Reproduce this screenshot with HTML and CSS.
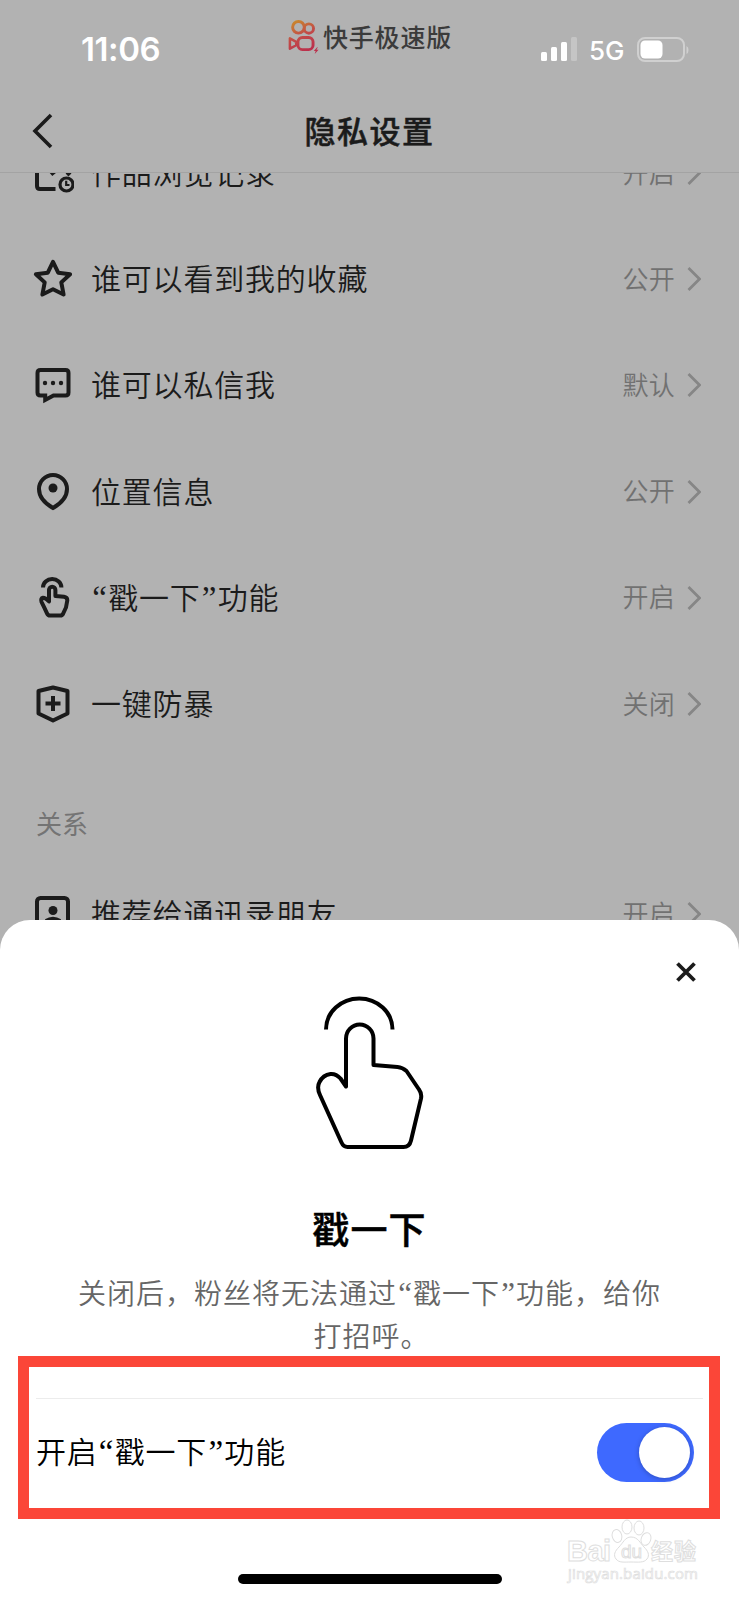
FILE: index.html
```html
<!DOCTYPE html>
<html lang="zh-CN">
<head>
<meta charset="utf-8">
<title>隐私设置</title>
<link rel="stylesheet" href="styles.css">
</head>
<body>
<div class="screen">
  <header class="top">
    <div class="status">
      <div class="time">11:06</div>
      <div class="brand">
        <svg class="brand-logo" width="32" height="36" viewBox="0 0 32 36" fill="none" stroke-width="3">
          <defs>
            <linearGradient id="warm" gradientUnits="userSpaceOnUse" x1="5" y1="2" x2="20" y2="32">
              <stop offset="0" stop-color="#c98a2c"/><stop offset=".5" stop-color="#c24c48"/><stop offset="1" stop-color="#bb304c"/>
            </linearGradient>
          </defs>
          <g stroke="url(#warm)">
            <circle cx="10.300" cy="8.500" r="6"/>
            <circle cx="21" cy="9.800" r="4.800"/>
            <rect x="9.800" y="19" width="15.500" height="12.500" rx="4.500"/>
            <path d="M1.500 20v10.500l6.500-3.500v-3.500z" stroke-linejoin="round" stroke-width="2.600"/>
          </g>
          <path d="M29.500 29l-3.500 4h2l-1 3 4-4.500h-2.200l1.400-2.500z" fill="#bb304c"/>
        </svg>
        <span>快手极速版</span>
      </div>
      <div class="signals">
        <svg width="38" height="26" viewBox="0 0 38 26" fill="#fff">
          <rect x="1" y="15" width="6" height="9" rx="1.500"/>
          <rect x="11" y="10" width="6" height="14" rx="1.500"/>
          <rect x="21" y="5" width="6" height="19" rx="1.500"/>
          <rect x="31" y="0" width="6" height="24" rx="1.500" opacity=".25"/>
        </svg>
        <span class="network">5G</span>
        <svg class="battery" width="52" height="26" viewBox="0 0 52 26">
          <rect x="1" y="1" width="46" height="23" rx="7" fill="none" stroke="#d0d0d0" stroke-width="2"/>
          <rect x="3.500" y="3.500" width="22" height="18" rx="4.500" fill="#fff"/>
          <path d="M49.500 9v8q2-1 2-4t-2-4z" fill="#d0d0d0"/>
        </svg>
      </div>
    </div>
    <div class="nav">
      <svg class="back" width="22" height="36" viewBox="0 0 22 36"><path d="M20 2L4 18l16 16" fill="none" stroke="#1b1b1b" stroke-width="3.600"/></svg>
      <h1>隐私设置</h1>
    </div>
  </header>

  <main class="list">
    <div class="row">
      <svg class="icon" viewBox="0 0 42 42"><path d="M15 8H5v26q0 3 3 3h15.500" stroke-linejoin="round"/><path d="M19 22.500l6-5M35 23l3-3"/><circle cx="34.500" cy="32.500" r="6.500" stroke-width="3.200"/><path d="M34.200 28.800v4.200h3.300" stroke-width="2.200"/></svg>
      <span class="label">作品浏览记录</span><span class="value">开启</span>
      <svg class="arrow" viewBox="0 0 14 26"><path d="M1.500 2l11 11-11 11"/></svg>
    </div>
    <div class="row">
      <svg class="icon" viewBox="0 0 42 42"><path d="M21 3.800l5.200 10.900 11.900 1.500-8.800 8.200 2.300 12.100L21 31.300 10.400 36.500l2.300-12.100-8.800-8.200 11.900-1.500z" stroke-linejoin="round"/></svg>
      <span class="label">谁可以看到我的收藏</span><span class="value">公开</span>
      <svg class="arrow" viewBox="0 0 14 26"><path d="M1.500 2l11 11-11 11"/></svg>
    </div>
    <div class="row">
      <svg class="icon" viewBox="0 0 42 42"><path d="M8.500 6h25q3 0 3 3v19.500q0 3-3 3H21.500l-8.300 4.500v-4.500H8.500q-3 0-3-3V9q0-3 3-3z"/><g fill="#1b1b1b" stroke="none"><circle cx="13" cy="19" r="2.200"/><circle cx="21" cy="19" r="2.200"/><circle cx="29" cy="19" r="2.200"/></g></svg>
      <span class="label">谁可以私信我</span><span class="value">默认</span>
      <svg class="arrow" viewBox="0 0 14 26"><path d="M1.500 2l11 11-11 11"/></svg>
    </div>
    <div class="row">
      <svg class="icon" viewBox="0 0 42 42"><path d="M21 37C14 33 7 26.500 7 18a14 14 0 0 1 28 0c0 8.500-7 15-14 19z"/><circle cx="21" cy="17" r="4.500" fill="#1b1b1b" stroke="none"/></svg>
      <span class="label">位置信息</span><span class="value">公开</span>
      <svg class="arrow" viewBox="0 0 14 26"><path d="M1.500 2l11 11-11 11"/></svg>
    </div>
    <div class="row">
      <svg class="icon" viewBox="0 0 42 42"><path d="M11 10.500a9.200 8.500 0 0 1 18.400 0" /><path d="M17 24.500V13a3.200 3.200 0 0 1 6.400 0V19l8.600.8q3.300.5 3.300 3.500-.5 7-4 13-1 2.200-3 2.200H18q-2 0-3-2.200-2.500-5.500-5.500-11.500-1-3.500 1.500-4 2.500 0 6 3.700z" stroke-linejoin="round"/></svg>
      <span class="label"><i class="q">“</i>戳一下<i class="q">”</i>功能</span><span class="value">开启</span>
      <svg class="arrow" viewBox="0 0 14 26"><path d="M1.500 2l11 11-11 11"/></svg>
    </div>
    <div class="row">
      <svg class="icon" viewBox="0 0 42 42"><path d="M21 4.500L35.500 8v22.500L21 37.500 6.500 30.500V8z" stroke-linejoin="round"/><path d="M21 13v15M13.500 20.500h15"/></svg>
      <span class="label">一键防暴</span><span class="value">关闭</span>
      <svg class="arrow" viewBox="0 0 14 26"><path d="M1.500 2l11 11-11 11"/></svg>
    </div>
    <h2 class="section">关系</h2>
    <div class="row">
      <svg class="icon" viewBox="0 0 42 42"><rect x="5" y="5" width="31" height="33" rx="3.500"/><circle cx="21" cy="17.500" r="4.500" fill="#1b1b1b" stroke="none"/><path d="M14 28q7-4.500 14 0"/></svg>
      <span class="label">推荐给通讯录朋友</span><span class="value">开启</span>
      <svg class="arrow" viewBox="0 0 14 26"><path d="M1.500 2l11 11-11 11"/></svg>
    </div>
  </main>

  <section class="sheet">
    <div class="sheet-head">
      <svg width="20" height="20" viewBox="0 0 20 20"><path d="M1.500 1.500l17 17M18.500 1.500l-17 17" stroke="#1b1b1b" stroke-width="3.800"/></svg>
    </div>
    <svg class="hero" width="110" height="156" viewBox="0 0 110 156" fill="none" stroke="#000" stroke-width="4">
      <path d="M10 33.500a33.200 31 0 0 1 66.500 0"/>
      <path d="M30 90.500V42.500a13.700 14 0 0 1 27.500 0V69l24 2q5 .5 9 4l12.500 18.500q3 4 2 9L95 144.500q-1.500 6.500-7.500 6.500H31.500q-4 0-6-4.500L4 99q-3.500-7.500-.500-13 3.500-7 11-8 5.500-.5 10 4.500z" stroke-linejoin="round"/>
    </svg>
    <h3>戳一下</h3>
    <p>关闭后，粉丝将无法通过<i class="q">“</i>戳一下<i class="q">”</i>功能，给你<br><span class="tail">打招呼。</span></p>
    <div class="setting">
      <span class="setting-name">开启<i class="q">“</i>戳一下<i class="q">”</i>功能</span>
      <div class="toggle"><div class="knob"></div></div>
    </div>
    <div class="home"></div>
    <div class="highlight"></div>
    <svg class="mark" width="150" height="76" viewBox="0 0 150 76" fill="#fff" stroke="#dedede" stroke-width="1">
      <text class="mark-name" x="7" y="46" textLength="44">Bai</text>
      <ellipse cx="57" cy="21" rx="4.800" ry="6.500" transform="rotate(-15 57 21)"/>
      <ellipse cx="67" cy="12" rx="5" ry="7"/><ellipse cx="79" cy="13" rx="5" ry="7"/>
      <ellipse cx="86" cy="24" rx="4.800" ry="6.500" transform="rotate(20 86 24)"/>
      <path d="M71 22c7 0 9 6 13 10s6 8 3 12-9 3-16 3-12 1-15-3-1-8 3-12 6-10 12-10z"/>
      <text class="mark-du" x="61" y="43">du</text>
      <text class="mark-cn" x="91" y="44" textLength="45">经验</text>
      <text class="mark-url" x="8" y="64" textLength="130">jingyan.baidu.com</text>
    </svg>
  </section>
</div>
</body>
</html>
```
FILE: styles.css
```css
* { box-sizing: border-box; }
body { margin: 0; font-family: "Noto Sans CJK SC", sans-serif; }
h1, h2, h3, p { margin: 0; }
svg { display: block; flex: none; }

.screen {
  position: relative;
  width: 739px;
  height: 1600px;
  overflow: hidden;
  display: flex;
  flex-direction: column;
  background: #b2b2b2;
  color: #1b1b1b;
}
.top { height: 173px; flex: none; border-bottom: 1px solid #a3a3a3; }
.status { height: 92px; display: grid; grid-template-columns: 288px 1fr 200px; }
.time {
  padding: 30px 0 0 81px;
  font: 600 33px/38px Inter, sans-serif;
  letter-spacing: -.4px;
  color: #fff;
}
.brand {
  display: flex;
  align-items: flex-start;
  padding-top: 18px;
  color: #3b3b3b;
  font-size: 25px;
  font-weight: 500;
  line-height: 36px;
  letter-spacing: .8px;
}
.brand-logo { margin-right: 3px; padding-top: 1px; }
.signals { display: flex; align-items: flex-start; padding: 37px 0 0 1px; color: #fff; }
.network { margin-left: 11px; font: 500 26px/27px Inter, sans-serif; width: 36px; }
.battery { margin-left: 12px; }
.nav {
  display: grid;
  grid-template-columns: 60px 1fr 60px;
  align-items: center;
  height: 78px;
}
.back { margin-left: 31px; }
.nav h1 { padding-bottom: 2px; text-align: center; font-size: 31px; font-weight: 500; letter-spacing: 1.500px; line-height: 40px; -webkit-text-stroke: .5px #1b1b1b; }

.list { flex: 1; overflow: hidden; }
.list .row:first-child { margin-top: -53px; }
.row { display: flex; align-items: center; height: 106.200px; padding: 0 38px 0 32px; }
.icon { width: 42px; height: 42px; fill: none; stroke: #1b1b1b; stroke-width: 4; }
.label { flex: 1; margin-left: 17px; padding-bottom: 4px; font-size: 30px; letter-spacing: .8px; line-height: 44px; font-weight: 350; }
.value { padding-bottom: 4px; font-size: 26px; letter-spacing: .3px; color: #717171; font-weight: 350; }
.arrow { width: 14px; height: 26px; margin-left: 12px; fill: none; stroke: #868686; stroke-width: 2.800; }
.section { height: 104px; padding: 36px 0 0 36px; font-size: 26px; line-height: 60px; font-weight: 400; color: #747474; }
.q {
  display: inline-block;
  width: .52em;
  height: 1em;
  font-family: "Liberation Serif", serif;
  font-size: 1.1em;
  line-height: 1;
  font-style: normal;
  text-align: center;
  letter-spacing: 0;
}

.sheet {
  position: absolute;
  left: 0; right: 0; bottom: 0;
  height: 680px;
  border-radius: 30px 30px 0 0;
  background: #fff;
  color: #000;
  display: flex;
  flex-direction: column;
}
.sheet-head { height: 76px; display: flex; justify-content: flex-end; padding: 42px 43px 0 0; }
.hero { margin-left: 316px; }
.sheet h3 { margin-top: 51px; height: 50px; line-height: 50px; text-align: center; font-size: 37px; letter-spacing: 1.200px; font-weight: 500; -webkit-text-stroke: .5px #000; }
.sheet p { margin-top: 18px; height: 86px; text-align: center; font-size: 28px; letter-spacing: 1px; line-height: 43px; color: #666; font-weight: 350; }
.tail { padding-left: 4px; }
.setting {
  margin: 41px 36px 0;
  height: 107px;
  border-top: 1px solid #ececec;
  display: flex;
  align-items: center;
  justify-content: space-between;
  padding-right: 9px;
  font-size: 30px;
  letter-spacing: .8px;
  font-weight: 350;
}
.setting-name { padding-bottom: 5px; line-height: 44px; }
.toggle { width: 97px; height: 59px; border-radius: 30px; background: #3e69ff; display: flex; justify-content: flex-end; padding: 4px; }
.knob { width: 51px; height: 51px; border-radius: 50%; background: #fff; box-shadow: 0 1px 5px rgba(0,0,0,.25); }
.home { width: 264px; height: 10px; margin: 69px 0 0 238px; border-radius: 5px; background: #000; }
.highlight { position: absolute; left: 18px; top: 436px; width: 702px; height: 163px; border: 11px solid #fb4638; }
.mark { position: absolute; left: 560px; top: 595px; }
.mark-name { font: 700 29px "Liberation Sans", sans-serif; }
.mark-du { font: 400 19px "Liberation Sans", sans-serif; }
.mark-cn { font: 700 22px "Noto Sans CJK SC", sans-serif; }
.mark-url { font: 400 15px "Open Sans", sans-serif; stroke-width: .7px; }
```
